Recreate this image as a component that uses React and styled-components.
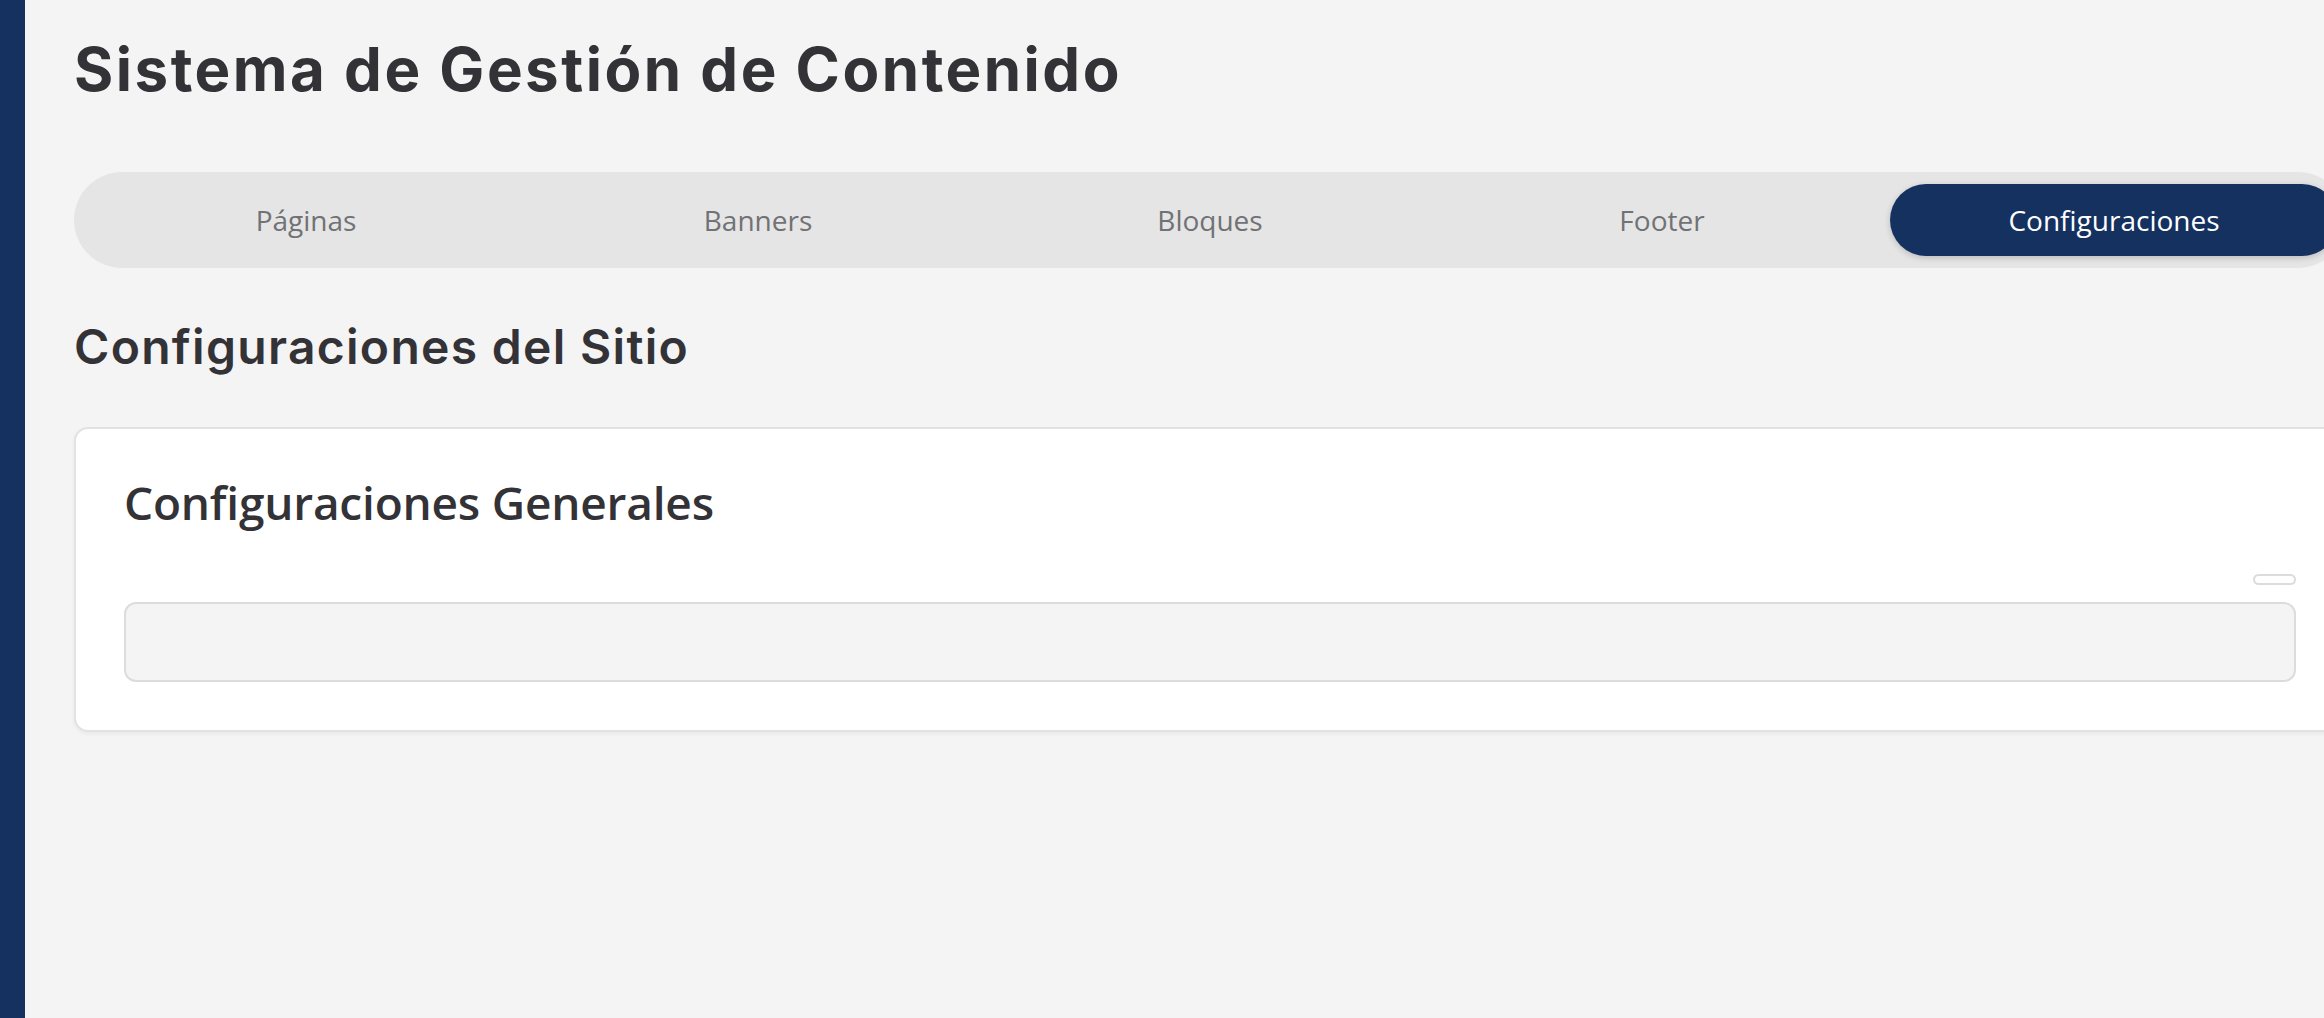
import React, { useState } from "react";
import styled, { createGlobalStyle } from "styled-components";

const GlobalStyle = createGlobalStyle`
  html, body {
    margin: 0;
    padding: 0;
    background: #f4f4f4;
    overflow: hidden;
  }
  * { box-sizing: border-box; }
`;

const Layout = styled.div`
  display: flex;
  min-height: 100vh;
  background: #f4f4f4;
`;

const Sidebar = styled.aside`
  flex: 0 0 25px;
  width: 25px;
  background: #14315f;
  min-height: 100vh;
`;

const Main = styled.main`
  flex: 0 0 auto;
  padding: 33px 0 0 49px;
`;

const Content = styled.div`
  width: 2272px;
  display: flex;
  flex-direction: column;
`;

const PageTitle = styled.h1`
  margin: 0;
  font-family: Inter, "Noto Sans", sans-serif;
  font-weight: 700;
  font-size: 60px;
  line-height: 72px;
  letter-spacing: 2.5px;
  color: #333337;
`;

const TabBar = styled.nav`
  margin-top: 67px;
  display: grid;
  grid-template-columns: repeat(5, 1fr);
  gap: 4px;
  padding: 12px 8px;
  background: #e5e5e5;
  border-radius: 48px;
`;

const Tab = styled.button`
  height: 72px;
  border: none;
  border-radius: 36px;
  font-family: "Open Sans", sans-serif;
  font-size: 28px;
  font-weight: 400;
  cursor: pointer;
  background: ${(p) => (p.$active ? "#14315f" : "transparent")};
  color: ${(p) => (p.$active ? "#ffffff" : "#707276")};
  box-shadow: ${(p) => (p.$active ? "0 2px 6px rgba(0,0,0,0.18)" : "none")};
`;

const SectionTitle = styled.h2`
  margin: 50px 0 0;
  font-family: Inter, "Noto Sans", sans-serif;
  font-weight: 600;
  font-size: 48px;
  line-height: 58px;
  letter-spacing: 1.3px;
  color: #333337;
`;

const Card = styled.section`
  margin-top: 51px;
  background: #ffffff;
  border: 2px solid #e2e2e2;
  border-radius: 14px;
  box-shadow: 0 2px 4px rgba(0, 0, 0, 0.05);
  padding: 46px 48px 48px;
  display: flex;
  flex-direction: column;
`;

const CardTitle = styled.h3`
  margin: 0;
  font-family: "Open Sans", sans-serif;
  font-weight: 600;
  font-size: 46px;
  line-height: 55px;
  letter-spacing: -0.2px;
  color: #333337;
`;

const ActionRow = styled.div`
  margin-top: 44px;
  display: flex;
  justify-content: flex-end;
`;

const PillButton = styled.button`
  width: 43px;
  height: 11px;
  padding: 0;
  border: 2px solid #dcdcdc;
  border-radius: 999px;
  background: #ffffff;
`;

const Field = styled.div`
  margin-top: 17px;
  height: 80px;
  background: #f4f4f4;
  border: 2px solid #dcdcdc;
  border-radius: 12px;
`;

const tabs = ["Páginas", "Banners", "Bloques", "Footer", "Configuraciones"];

export default function App() {
  const [active, setActive] = useState("Configuraciones");
  return (
    <>
      <GlobalStyle />
      <Layout>
        <Sidebar />
        <Main>
          <Content>
            <PageTitle>Sistema de Gestión de Contenido</PageTitle>
            <TabBar>
              {tabs.map((t) => (
                <Tab key={t} $active={t === active} onClick={() => setActive(t)}>
                  {t}
                </Tab>
              ))}
            </TabBar>
            <SectionTitle>Configuraciones del Sitio</SectionTitle>
            <Card>
              <CardTitle>Configuraciones Generales</CardTitle>
              <ActionRow>
                <PillButton aria-label="acción" />
              </ActionRow>
              <Field />
            </Card>
          </Content>
        </Main>
      </Layout>
    </>
  );
}
